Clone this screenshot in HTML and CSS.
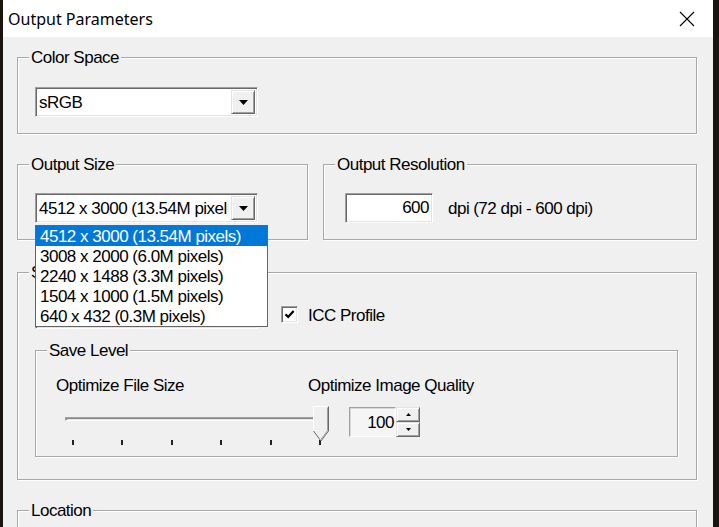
FILE: index.html
```html
<!DOCTYPE html>
<html>
<head>
<meta charset="utf-8">
<title>Output Parameters</title>
<link rel="stylesheet" href="styles.css">
</head>
<body>
<div class="screen">
  <div class="dialog">
    <div class="titlebar">
      <span class="title">Output Parameters</span>
      <svg class="close" width="16" height="16" viewBox="0 0 16 16"><path d="M1 1 L15 15 M15 1 L1 15" stroke="#000" stroke-width="1.1" fill="none"/></svg>
    </div>
    <div class="content">
      <fieldset class="group">
        <legend>Color Space</legend>
        <div class="gbody gb-color">
          <div class="combo">
            <span class="combo-text">sRGB</span>
            <span class="combo-btn"><svg width="9" height="5" viewBox="0 0 9 5"><polygon points="0,0 9,0 4.5,5" fill="#000"/></svg></span>
          </div>
        </div>
      </fieldset>

      <div class="row">
        <fieldset class="group g-size">
          <legend>Output Size</legend>
          <div class="gbody gb-size">
            <div class="combo-wrap">
              <div class="combo">
                <span class="combo-text">4512 x 3000 (13.54M pixel</span>
                <span class="combo-btn"><svg width="9" height="5" viewBox="0 0 9 5"><polygon points="0,0 9,0 4.5,5" fill="#000"/></svg></span>
              </div>
              <ul class="dropdown">
                <li class="selected">4512 x 3000 (13.54M pixels)</li>
                <li>3008 x 2000 (6.0M pixels)</li>
                <li>2240 x 1488 (3.3M pixels)</li>
                <li>1504 x 1000 (1.5M pixels)</li>
                <li>640 x 432 (0.3M pixels)</li>
              </ul>
            </div>
          </div>
        </fieldset>
        <fieldset class="group g-res">
          <legend class="legend-res">Output Resolution</legend>
          <div class="gbody gb-res">
            <span class="field">600</span>
            <span class="unit">dpi</span>
            <span class="range">(72 dpi - 600 dpi)</span>
          </div>
        </fieldset>
      </div>

      <fieldset class="group g-save">
        <legend>S</legend>
        <div class="gbody gb-save">
          <div class="save-row">
            <div class="combo">
              <span class="combo-text"></span>
              <span class="combo-btn"><svg width="9" height="5" viewBox="0 0 9 5"><polygon points="0,0 9,0 4.5,5" fill="#000"/></svg></span>
            </div>
            <span class="checkbox"><svg width="15" height="15" viewBox="0 0 15 15"><path d="M3.5 7.2 L6.2 10 L11.6 4" stroke="#000" stroke-width="2.2" fill="none"/></svg></span>
            <span class="check-label">ICC Profile</span>
          </div>
          <fieldset class="group g-level">
            <legend>Save Level</legend>
            <div class="gbody gb-level">
              <div class="level-labels">
                <span class="lbl-left">Optimize File Size</span>
                <span>Optimize Image Quality</span>
              </div>
              <div class="level-controls">
                <div class="slider">
                  <div class="track"></div>
                  <div class="ticks"><i></i><i></i><i></i><i></i><i></i><i></i></div>
                  <svg class="thumb" width="16" height="36" viewBox="0 0 16 36">
                    <polygon points="0.5,0.5 15.5,0.5 15.5,25 8,35 0.5,25" fill="#f0f0f0"/>
                    <path d="M0.5 25 L0.5 0.5 L15 0.5" stroke="#fff" stroke-width="1" fill="none"/>
                    <path d="M15.5 0.5 L15.5 25 L8 35 L0.5 25" stroke="#696969" stroke-width="1" fill="none"/>
                    <path d="M14.5 1.5 L14.5 24.6 L8 33.3" stroke="#a0a0a0" stroke-width="1" fill="none"/>
                  </svg>
                </div>
                <div class="spin">
                  <span class="spin-edit">100</span>
                  <span class="spin-btns">
                    <span class="spin-btn"><svg width="5" height="3" viewBox="0 0 5 3"><polygon points="2.5,0 5,3 0,3" fill="#000"/></svg></span>
                    <span class="spin-btn"><svg width="5" height="3" viewBox="0 0 5 3"><polygon points="0,0 5,0 2.5,3" fill="#000"/></svg></span>
                  </span>
                </div>
              </div>
            </div>
          </fieldset>
        </div>
      </fieldset>

      <fieldset class="group g-loc">
        <legend>Location</legend>
        <div class="gbody gb-loc"></div>
      </fieldset>
    </div>
  </div>
</div>
</body>
</html>
```

FILE: styles.css
```css
* { box-sizing: border-box; }

html, body {
  margin: 0;
  padding: 0;
}

body {
  background: #1a1411;
  overflow: hidden;
  font-family: "Liberation Sans", Arial, sans-serif;
  font-size: 17px;
  letter-spacing: -0.5px;
  color: #000;
}

.screen {
  display: flex;
  height: 527px;
  padding-left: 3px;
}

.dialog {
  width: 710px;
  background: #f0f0f0;
  display: flex;
  flex-direction: column;
}

.titlebar {
  height: 37px;
  flex: none;
  background: #fff;
  display: flex;
  align-items: center;
  justify-content: space-between;
  padding: 0 18px 0 5px;
}

.title {
  font-family: "Noto Sans", sans-serif;
  font-size: 16px;
  letter-spacing: 0;
  margin-top: 1px;
}

.close { display: block; }

.content {
  padding: 11px 16px 0 14px;
}

/* group boxes */
.group {
  margin: 0;
  padding: 0;
  min-width: 0;
  border: 1px solid #a8a8a8;
  box-shadow: inset 1px 1px 0 #fff, 1px 1px 0 #fff;
}

.group > legend {
  margin-left: 11px;
  padding: 1px 2px 0;
  height: 18px;
  line-height: 18px;
  background: #f0f0f0;
}

.legend-res { margin-left: 12px; }

.gb-color { padding: 21px 0 16px 17px; }

.row {
  display: flex;
  gap: 15px;
  margin-top: 21px;
}

.g-size { width: 291px; flex: none; }
.g-res { flex: 1; }

.gb-size { padding: 20px 0 16px 17px; }

.gb-res {
  padding: 20px 0 16px 21px;
  display: flex;
  align-items: center;
}

.g-save { margin-top: 23px; }
.gb-save { padding: 18px 0 22px 17px; }

.g-level { width: 643px; margin-top: 12px; }
.gb-level { padding: 18px 0 9px 20px; }

.g-loc { margin-top: 21px; }
.gb-loc { height: 40px; }

/* combo box */
.combo-wrap { position: relative; width: 223px; }

.combo {
  display: flex;
  width: 223px;
  height: 30px;
  background: #fff;
  border: 1px solid;
  border-color: #a0a0a0 #fff #fff #a0a0a0;
  box-shadow: inset 1px 1px 0 #696969, inset -1px -1px 0 #e3e3e3;
  padding: 2px;
}

.combo-text {
  flex: 1;
  min-width: 0;
  overflow: hidden;
  white-space: nowrap;
  padding-left: 1px;
  line-height: 26px;
}

.combo-btn {
  width: 24px;
  flex: none;
  display: flex;
  align-items: center;
  justify-content: center;
  background: #f0f0f0;
  border: 1px solid;
  border-color: #e3e3e3 #696969 #696969 #e3e3e3;
  box-shadow: inset 1px 1px 0 #fff, inset -1px -1px 0 #a0a0a0;
}

.dropdown {
  position: absolute;
  left: 0;
  top: 32px;
  width: 233px;
  margin: 0;
  padding: 0;
  list-style: none;
  background: #fff;
  border: 1px solid #646464;
  z-index: 5;
}

.dropdown li {
  height: 20px;
  line-height: 21px;
  padding-left: 4px;
  white-space: nowrap;
}

.dropdown li.selected {
  background: #0078d7;
  color: #fff;
}

/* resolution field */
.field {
  width: 88px;
  height: 30px;
  background: #fff;
  border: 1px solid;
  border-color: #a0a0a0 #fff #fff #a0a0a0;
  box-shadow: inset 1px 1px 0 #696969, inset -1px -1px 0 #e3e3e3;
  text-align: right;
  padding-right: 3px;
  line-height: 28px;
}

.unit { margin-left: 15px; padding-top: 2px; }
.range { margin-left: 4px; padding-top: 2px; }

/* save row */
.save-row {
  display: flex;
  align-items: center;
}

.checkbox {
  width: 17px;
  height: 17px;
  margin-left: 23px;
  background: #fff;
  border: 1px solid;
  border-color: #a0a0a0 #fff #fff #a0a0a0;
  box-shadow: inset 1px 1px 0 #696969, inset -1px -1px 0 #e3e3e3;
  display: flex;
}

.check-label { margin-left: 10px; padding-top: 3px; }

/* save level */
.level-labels {
  display: flex;
  line-height: 18px;
}

.lbl-left { width: 252px; }

.level-controls {
  display: flex;
  align-items: flex-start;
  margin-top: 10px;
}

.slider {
  position: relative;
  width: 274px;
  height: 42px;
}

.track {
  margin: 12px 0 0 9px;
  width: 256px;
  height: 4px;
  background: #e3e3e3;
  border: 1px solid;
  border-color: #a0a0a0 #fff #fff #a0a0a0;
  box-shadow: inset 1px 1px 0 #8a8a8a;
}

.ticks {
  display: flex;
  justify-content: space-between;
  width: 249px;
  margin: 19px 0 0 16px;
}

.ticks i {
  display: block;
  width: 2px;
  height: 5px;
  background: #222;
}

.thumb {
  position: absolute;
  left: 257px;
  top: 1px;
}

.spin {
  display: flex;
  margin: 2px 0 0 19px;
}

.spin-edit {
  width: 47px;
  height: 30px;
  background: #f5f5f5;
  border: 1px solid;
  border-color: #a0a0a0 #fff #fff #a0a0a0;
  box-shadow: inset 1px 1px 0 #d8d8d8;
  text-align: right;
  padding-right: 1px;
  line-height: 30px;
}

.spin-btns {
  width: 24px;
  display: flex;
  flex-direction: column;
}

.spin-btn {
  height: 15px;
  display: flex;
  align-items: center;
  justify-content: center;
  background: #f0f0f0;
  border: 1px solid;
  border-color: #e3e3e3 #696969 #696969 #e3e3e3;
  box-shadow: inset 1px 1px 0 #fff, inset -1px -1px 0 #a0a0a0;
}
```
